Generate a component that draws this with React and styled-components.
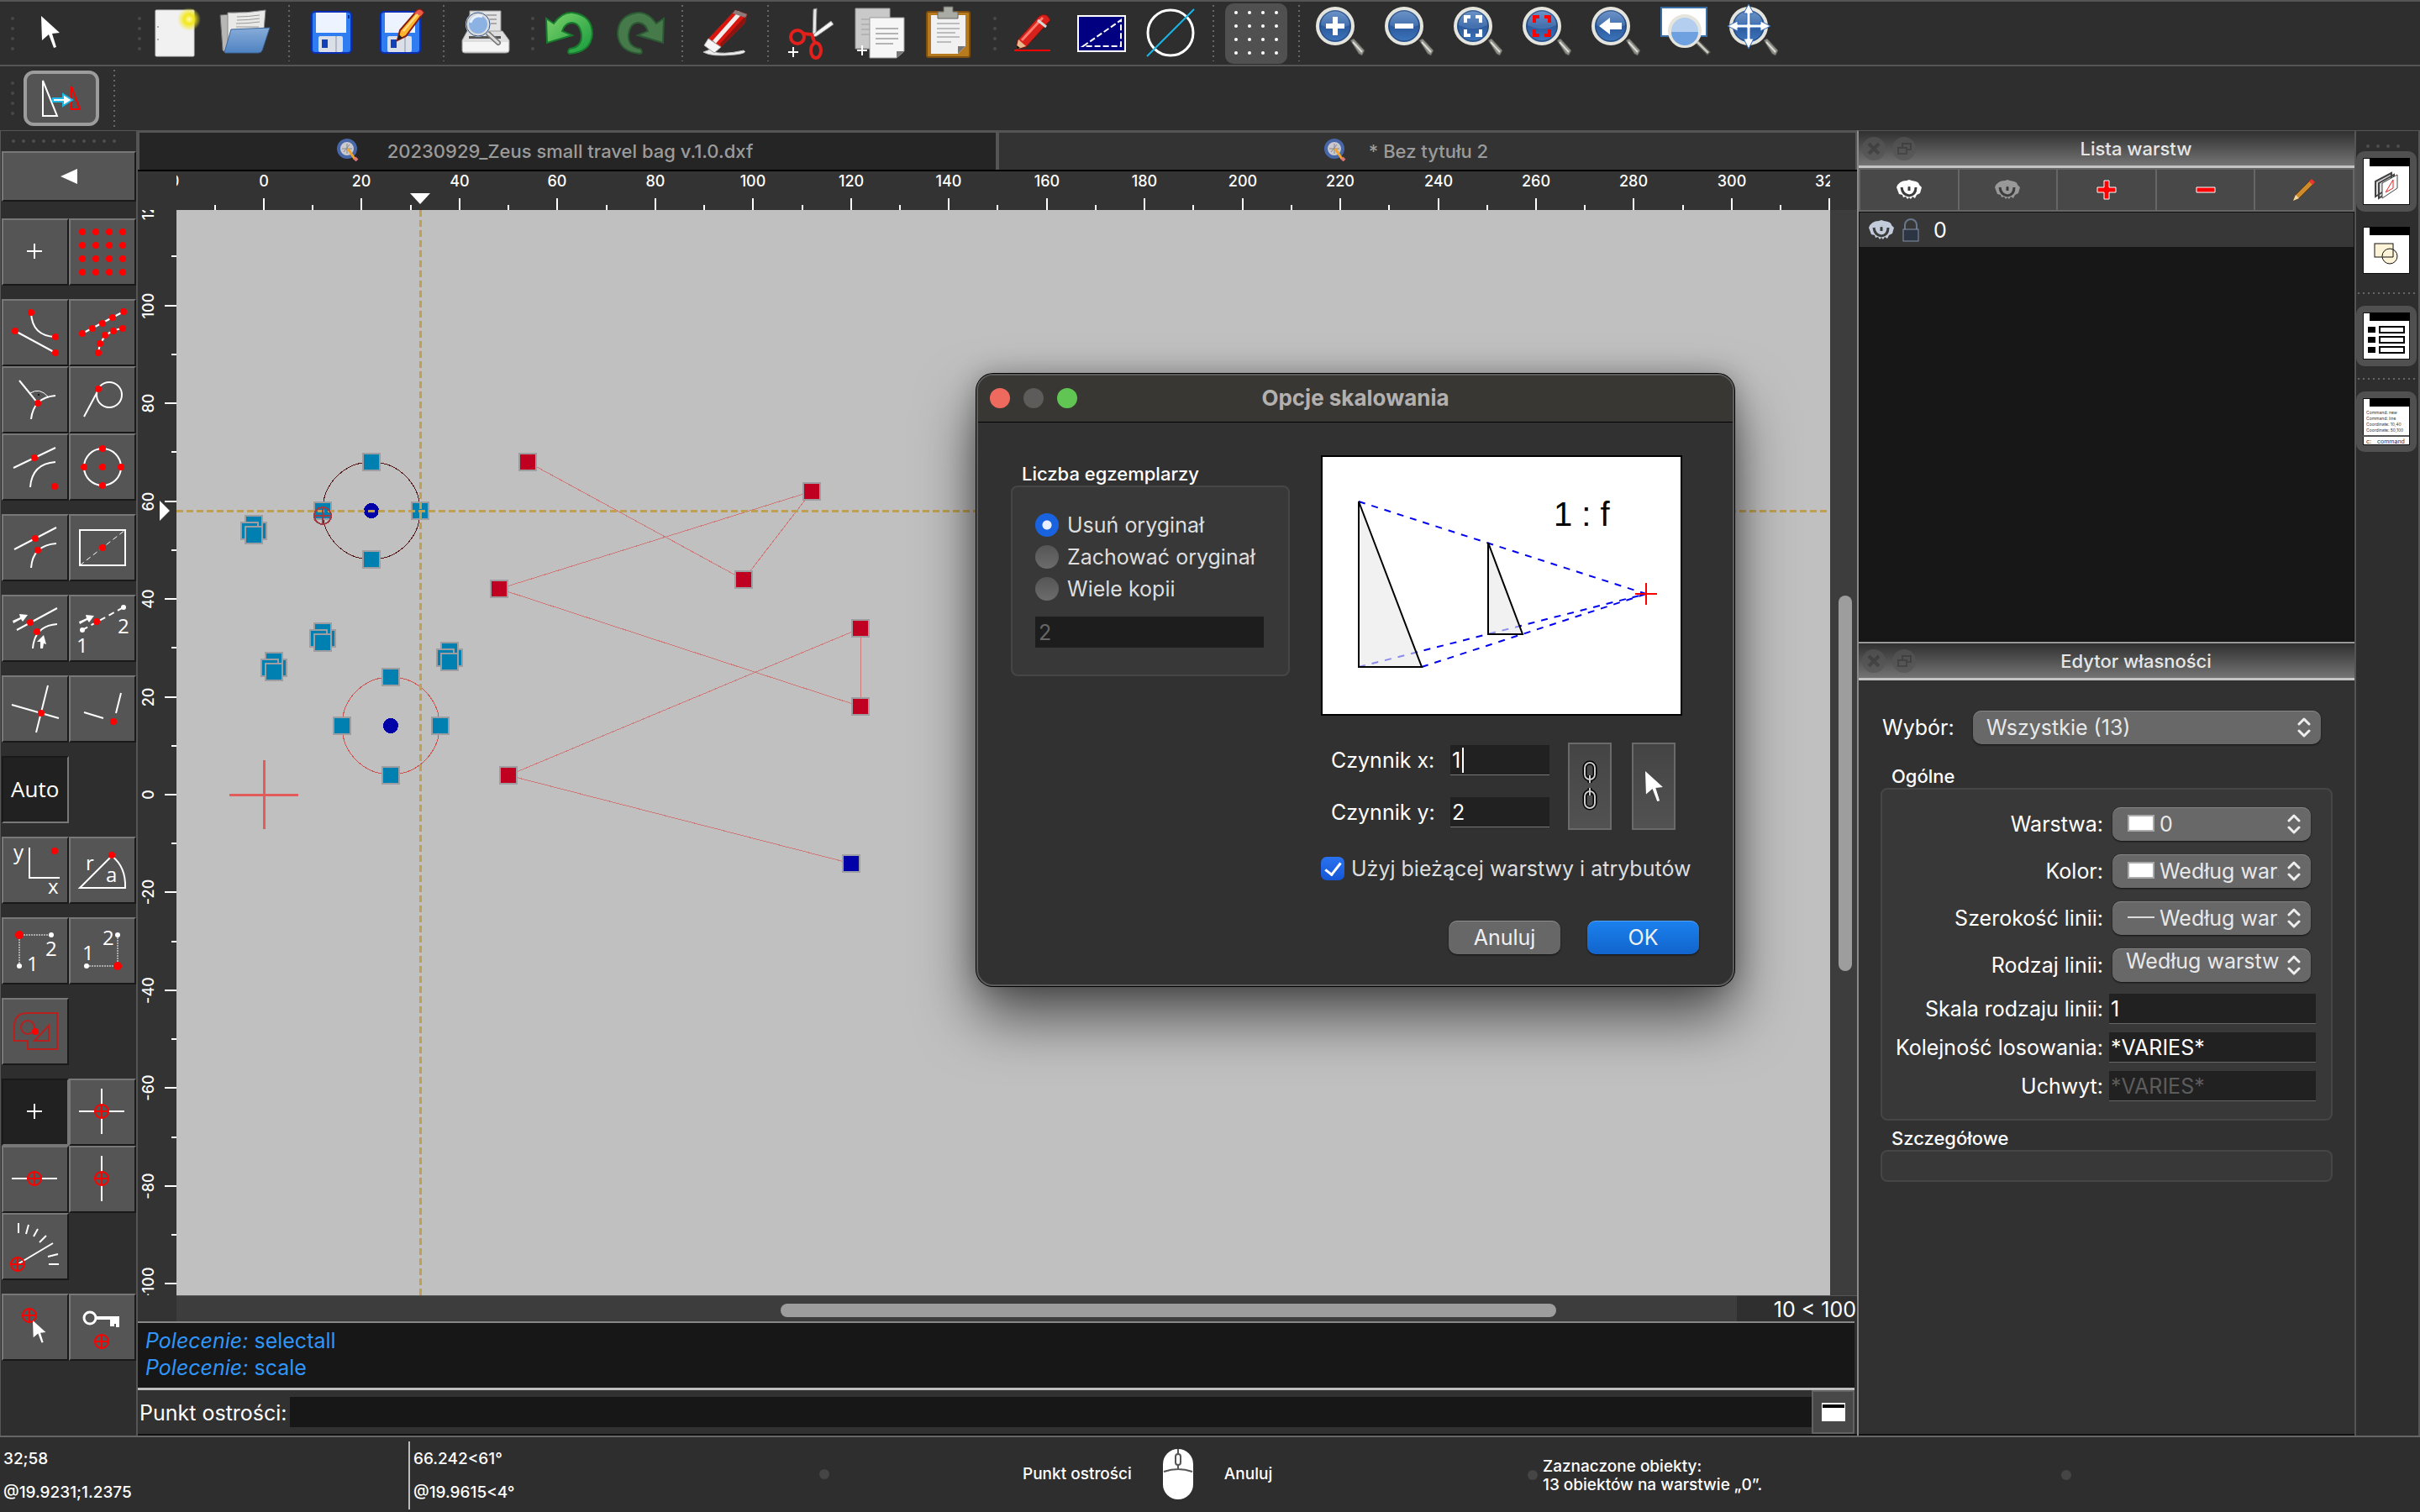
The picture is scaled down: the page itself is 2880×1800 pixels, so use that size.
import { useState } from "react";
import styled, { createGlobalStyle, css } from "styled-components";

/* world units -> canvas pixels */
const UNIT = 5.823;
const ORIGIN = { x: 104, y: 696 };
const px = (x) => Math.round(ORIGIN.x + x * UNIT);
const py = (y) => Math.round(ORIGIN.y - y * UNIT);

const range = (from, to, step) => {
    const out = [];
    for (let v = from; v <= to; v += step) out.push(v);
    return out;
};

/* ---------- toolbar icons (60 x 60) ---------- */

const CursorShape = ({ x = 0, y = 0, s = 1 }) => (
    <path
        transform={`translate(${x} ${y}) scale(${s})`}
        d="M0 0 L1 29 L9 22 L15 38 L18 37 L13 21 L22 20 Z"
        fill="#fff"
        stroke="none"
    />
);

const Lens = ({ children }) => (
    <>
        <path d="M40 38 L44 36 L57 50 L54 56 L50 54 Z" fill="#8d8d87" stroke="#4f4f4b" />
        <path d="M43 40 L54 52" stroke="#dcdcd6" strokeWidth="2" />
        <circle cx="22" cy="21" r="21" fill="url(#lens)" stroke="#e6e5dd" strokeWidth="4" />
        <circle cx="22" cy="21" r="18" fill="none" stroke="#27456f" strokeWidth="1" />
        <path d="M5 20 A17 17 0 0 1 39 20 Q22 28 5 20" fill="#7fa7d8" opacity="0.3" />
        {children}
    </>
);

const Floppy = () => (
    <>
        <rect x="6" y="4" width="47" height="49" rx="4" fill="#2f7df0" stroke="#0b2fb4" strokeWidth="2" />
        <rect x="11" y="5" width="36" height="24" fill="#eef4ff" />
        <rect x="49" y="8" width="2" height="4" fill="#0a2a8a" />
        <rect x="14" y="33" width="29" height="19" rx="2" fill="#dadfe8" />
        <rect x="18" y="37" width="7" height="10" fill="#1342b8" />
        <rect x="34" y="33" width="2" height="19" fill="#b2b9c8" />
    </>
);

const Doc = ({ x, y, fill }) => (
    <g transform={`translate(${x} ${y})`}>
        <path d="M0 0 H41 V40 L32 48 H0 Z" fill={fill} stroke="#999" />
        <path d="M32 48 V40 H41 Z" fill="#777" />
        <path d="M7 13 H34 M7 19 H34 M7 25 H34 M7 31 H28" stroke="#b4b4b4" strokeWidth="2" />
    </g>
);

const Plus = ({ x, y }) => (
    <path d={`M${x - 6} ${y} H${x + 6} M${x} ${y - 6} V${y + 6}`} stroke="#fff" strokeWidth="2" />
);

const corners = (color) => (
    <path
        d="M13 17 V10 H19 M25 10 H31 V17 M31 25 V32 H25 M19 32 H13 V25"
        fill="none"
        stroke={color}
        strokeWidth="4"
    />
);

const icons = {
    cursor: <CursorShape x={19} y={9} />,
    newFile: (
        <>
            <rect x="4" y="2" width="46" height="55" rx="1" fill="#f1f1f1" stroke="#ccc" />
            <circle cx="7" cy="22" r="1" fill="#999" />
            <circle cx="7" cy="37" r="1" fill="#999" />
            <circle cx="44" cy="13" r="14" fill="url(#glow)" />
        </>
    ),
    open: (
        <>
            <path d="M-1 8 L10 7 L12 22 L6 53 L2 50 Z" fill="#b7b7b5" stroke="#666" />
            <path d="M8 5 Q30 6 53 2 L51 26 H14 L8 45 Z" fill="#e9e9e7" stroke="#888" />
            <path d="M19 10 Q32 10 46 8 M19 14 Q32 14 46 12 M18 18 Q32 18 46 16 M18 22 H45" stroke="#999" strokeWidth="1" fill="none" />
            <path d="M12 25 L58 23 L49 50 Q48 53 44 53 H5 Q3 53 5 49 Z" fill="url(#folder)" stroke="#3d6597" />
        </>
    ),
    save: <Floppy />,
    saveAs: (
        <>
            <Floppy />
            <path d="M26 38 L29 26 L49 3 Q53 -1 57 5 L36 33 Z" fill="#ffb52b" stroke="#8a1d0c" strokeWidth="2" />
            <path d="M49 3 Q53 -1 57 5 L54 9 L46 6 Z" fill="#ef5b4a" />
            <path d="M26 38 L28 31 L32 35 Z" fill="#222" />
            <path d="M33 27 L50 7" stroke="#ffe18c" strokeWidth="2" />
        </>
    ),
    print: (
        <>
            <path d="M10 3 H47 V30 H10 Z" fill="#e3e3e3" stroke="#999" />
            <path d="M26 8 H42 M28 13 H42 M28 18 H42" stroke="#aaa" strokeWidth="2" />
            <path d="M7 27 H49 L57 38 V50 Q57 53 53 53 H4 Q1 53 1 50 V38 Z" fill="#dedede" stroke="#a0a0a0" />
            <rect x="2" y="40" width="54" height="11" fill="#f5f5f5" />
            <rect x="9" y="33" width="38" height="3" fill="#555" />
            <path d="M32 30 L44 41" stroke="#777" strokeWidth="6" strokeLinecap="round" />
            <path d="M32 30 L44 41" stroke="#ddd" strokeWidth="3" strokeLinecap="round" />
            <circle cx="20" cy="19" r="13" fill="#8bb2e3" stroke="#dcdcdc" strokeWidth="4" />
            <circle cx="20" cy="19" r="14" fill="none" stroke="#33578c" />
            <path d="M11 17 A10 10 0 0 1 25 10" fill="none" stroke="#e6f0ff" strokeWidth="3" />
        </>
    ),
    undo: (
        <path
            d="M1 12 L10 18 Q20 4 32 5 Q56 8 56 31 Q54 52 29 54 Q25 52 29 48 Q44 46 43 31 Q41 17 31 17 Q23 18 20 27 L32 32 L2 41 Z"
            fill="url(#green)"
            stroke="#177a2c"
            strokeWidth="2"
        />
    ),
    redo: (
        <path
            d="M59 12 L50 18 Q40 4 28 5 Q4 8 4 31 Q6 52 31 54 Q35 52 31 48 Q16 46 17 31 Q19 17 29 17 Q37 18 40 27 L28 32 L58 41 Z"
            fill="#467a4a"
            stroke="#2b5a34"
            strokeWidth="2"
        />
    ),
    eraser: (
        <>
            <path d="M4 52 Q24 44 14 51 Q26 56 52 50 Q58 53 42 55 Q14 58 4 52" fill="#eee" stroke="#bbb" />
            <path d="M10 36 L42 2 L56 7 L53 18 L25 46 Z" fill="#d9150d" stroke="#7c2a26" />
            <path d="M56 7 L53 18 L25 46 L24 42 Z" fill="#8d1410" />
            <path d="M17 40 L48 5" stroke="#f3eeee" strokeWidth="5" />
            <path d="M10 36 L25 46 L17 53 L5 44 Z" fill="#f6f6f6" stroke="#aaa" />
            <path d="M42 2 L56 7 L54 11 L39 6 Z" fill="#8b7b79" />
        </>
    ),
    cut: (
        <>
            <path d="M33 1 L37 0 L36 32 L32 34 Z" fill="#e8e8e8" stroke="#888" />
            <path d="M54 15 L57 19 L37 33 L32 34 L34 30 Z" fill="#f5f5f5" stroke="#888" />
            <circle cx="14" cy="34" r="8" fill="none" stroke="#e3201c" strokeWidth="4" />
            <ellipse cx="36" cy="50" rx="6" ry="9" fill="none" stroke="#e3201c" strokeWidth="4" />
            <path d="M21 30 L31 31 L35 42" fill="none" stroke="#e3201c" strokeWidth="4" />
            <Plus x={9} y={52} />
        </>
    ),
    copy: (
        <>
            <Doc x={1} y={0} fill="#c9c9c9" />
            <Doc x={18} y={11} fill="#f6f6f6" />
            <Plus x={9} y={50} />
        </>
    ),
    paste: (
        <>
            <rect x="4" y="4" width="51" height="54" rx="2" fill="#b87a1e" stroke="#7d4f10" strokeWidth="2" />
            <path d="M9 8 H50 V45 L41 54 H9 Z" fill="#f1f1f1" />
            <path d="M41 54 V45 H50 Z" fill="#777" />
            <path d="M16 18 H43 M16 24 H43 M16 29 H38 M16 34 H43 M16 40 H33" stroke="#bdbdbd" strokeWidth="2" />
            <path d="M17 12 V4 H24 V-2 H35 V4 H41 V12 Z" fill="#a9aba5" stroke="#62645f" />
        </>
    ),
    pencil: (
        <>
            <path d="M10 49 L12 38 L38 9 Q47 4 51 14 L22 46 Z" fill="#d8211b" stroke="#6e1712" />
            <path d="M17 38 L42 11" stroke="#ff7a6c" strokeWidth="3" />
            <path d="M36 14 L46 22" stroke="#d9d9d9" strokeWidth="3" />
            <path d="M10 49 L13 37 L22 45 Z" fill="#e8b98a" />
            <path d="M10 49 L11 44 L15 47 Z" fill="#111" />
            <rect x="8" y="49" width="43" height="2" fill="#f00" />
        </>
    ),
    draft: (
        <>
            <rect x="2" y="9" width="56" height="42" fill="#000080" stroke="#fff" strokeWidth="2" />
            <path d="M8 45 L53 14 V45 Z" fill="none" stroke="#fff" strokeWidth="2" strokeDasharray="7 3" />
        </>
    ),
    circle: (
        <>
            <circle cx="30" cy="29" r="27" fill="none" stroke="#fff" strokeWidth="3" />
            <path d="M2 57 L58 1" stroke="#17b8ea" strokeWidth="2" />
        </>
    ),
    grid: (
        <g fill="#fff">
            {[6, 22, 38, 54].map((y) => [6, 22, 38, 54].map((x) => <circle key={`${x}-${y}`} cx={x} cy={y - 1} r="2" />))}
        </g>
    ),
    zoomIn: <Lens><path d="M22 10 V32 M11 21 H33" stroke="#fff" strokeWidth="6" /></Lens>,
    zoomOut: <Lens><path d="M11 21 H33" stroke="#fff" strokeWidth="6" /></Lens>,
    zoomAuto: <Lens>{corners("#fff")}</Lens>,
    zoomRed: <Lens>{corners("#f00")}</Lens>,
    zoomPrev: <Lens><path d="M8 21 L21 11 V17 H35 V25 H21 V31 Z" fill="#fff" /></Lens>,
    zoomWindow: (
        <>
            <rect x="0" y="-1" width="54" height="34" fill="#fff" stroke="#3a6ea5" strokeWidth="2" />
            <path d="M43 40 L57 54" stroke="#55554f" strokeWidth="6" />
            <path d="M43 40 L56 53" stroke="#c9c9c2" strokeWidth="3" />
            <circle cx="28" cy="27" r="18" fill="#b4cef0" stroke="#e6e5dd" strokeWidth="4" />
            <path d="M12 28 H44 A16 16 0 0 1 12 28" fill="#6fa0e0" />
        </>
    ),
    pan: (
        <Lens>
            <path
                d="M22 -5 L28 6 H24 V19 H36 V15 L48 21 L36 27 V23 H24 V36 H28 L22 48 L16 36 H20 V23 H9 V27 L-3 21 L9 15 V19 H20 V6 H16 Z"
                fill="#fff"
                stroke="#2f6ab8"
            />
        </Lens>
    ),
};

/* ---------- snap / restriction icons (80 x 80) ---------- */

const Dot = ({ x, y, r = 4, fill = "#f00" }) => <circle cx={x} cy={y} r={r} fill={fill} stroke="none" />;

const Marker = ({ x, y }) => (
    <path
        d={`M${x - 8} ${y} a8 8 0 1 0 16 0 a8 8 0 1 0 -16 0 H${x + 8} M${x} ${y - 8} V${y + 8}`}
        stroke="#f00"
        strokeWidth="2"
        fill="none"
    />
);

const glyph = (x, y, text) => (
    <text x={x} y={y} fill="#fff" stroke="none" fontSize="24" fontFamily='"Open Sans", "Noto Sans", sans-serif'>
        {text}
    </text>
);

const smallPlus = <path d="M30 39 H48 M39 30 V48" />;

const snaps = {
    free: smallPlus,
    grid: [16, 32, 48, 64].map((y) => [16, 32, 48, 64].map((x) => <Dot key={`${x}-${y}`} x={x} y={y} />)),
    endpoint: (
        <>
            <path d="M35 16 Q36 44 64 45 M16 38 L64 64" />
            <Dot x={35} y={16} /><Dot x={64} y={45} /><Dot x={16} y={38} /><Dot x={64} y={64} />
        </>
    ),
    points: (
        <>
            <path d="M16 41 L65 15 M35 64 Q38 38 64 35" />
            {[[16, 41], [28, 35], [40, 29], [52, 22], [65, 15], [35, 64], [37, 53], [43, 43], [53, 38], [64, 35]].map(
                ([x, y]) => <Dot key={`${x}-${y}`} x={x} y={y} />
            )}
        </>
    ),
    perpendicular: (
        <>
            <path d="M21 17 L43 44 M35 63 Q38 37 64 35" />
            <path d="M34 32 Q45 25 55 36" strokeWidth="1" />
            <Dot x={44} y={34} r={1} fill="#000" />
            <Dot x={43} y={44} />
        </>
    ),
    tangent: (
        <>
            <circle cx="48" cy="34" r="15" />
            <path d="M18 60 L33 32" />
            <Dot x={35} y={27} />
        </>
    ),
    onEntity: (
        <>
            <path d="M14 41 L64 17 M34 64 Q36 36 64 34" />
            <Dot x={39} y={29} /><Dot x={63} y={63} />
        </>
    ),
    center: (
        <>
            <circle cx="40" cy="40" r="22" />
            <Dot x={40} y={40} /><Dot x={18} y={40} /><Dot x={62} y={40} /><Dot x={40} y={18} /><Dot x={40} y={62} />
        </>
    ),
    middle: (
        <>
            <path d="M15 42 L65 16 M35 64 Q37 37 65 35" />
            <Dot x={40} y={29} /><Dot x={43} y={43} />
        </>
    ),
    reference: (
        <>
            <rect x="13" y="19" width="54" height="42" />
            <path d="M13 61 L67 19" strokeWidth="1" strokeDasharray="6 4" />
            <Dot x={40} y={40} />
        </>
    ),
    distance: (
        <>
            <path d="M18 42 L66 16 M37 64 Q39 37 66 35" />
            <path d="M13 31 L22 27 L21 23 L31 24 L25 32 L23 29 L14 34 Z M46 64 V56 H42 L50 48 L53 59 L50 58 L49 64 Z" fill="#fff" stroke="none" />
            <Dot x={34} y={33} /><Dot x={42} y={44} />
        </>
    ),
    distanceTwo: (
        <>
            <path d="M16 42 L65 15" strokeDasharray="7 5" />
            <path d="M12 32 L21 28 L20 24 L30 25 L24 33 L22 30 L13 35 Z" fill="#fff" stroke="none" />
            <Dot x={16} y={42} r={3} fill="#fff" /><Dot x={65} y={15} r={3} fill="#fff" />
            <Dot x={33} y={32} />
            {glyph(9, 69, "1")}
            {glyph(58, 46, "2")}
        </>
    ),
    intersection: (
        <>
            <path d="M12 35 L68 51 M55 12 L41 68" />
            <Dot x={47} y={45} />
        </>
    ),
    intersectionManual: (
        <>
            <path d="M18 44 L41 51 M62 21 L56 45" />
            <Dot x={53} y={55} />
        </>
    ),
    auto: <text x="11" y="49" fill="#fff" stroke="none" fontSize="26" fontFamily='"Open Sans", "Noto Sans", sans-serif'>Auto</text>,
    xy: (
        <>
            <path d="M33 13 V49 H69" />
            <Dot x={63} y={17} />
            {glyph(14, 27, "y")}
            {glyph(55, 68, "x")}
        </>
    ),
    polar: (
        <>
            <path d="M51 23 L13 61 H67 Q68 36 51 23" />
            <Dot x={51} y={22} />
            {glyph(20, 40, "r")}
            {glyph(44, 54, "a")}
        </>
    ),
    corner: (
        <>
            <path d="M21 58 V21 H59" strokeWidth="1" strokeDasharray="2 1" />
            <Dot x={59} y={21} r={3} fill="#fff" /><Dot x={21} y={58} r={3} fill="#fff" />
            <Dot x={21} y={21} r={5} />
            {glyph(52, 46, "2")}
            {glyph(30, 64, "1")}
        </>
    ),
    cornerTwo: (
        <>
            <path d="M58 21 V58 H21" strokeWidth="1" strokeDasharray="2 1" />
            <Dot x={58} y={21} r={3} fill="#fff" /><Dot x={21} y={58} r={3} fill="#fff" />
            <Dot x={58} y={58} r={5} />
            {glyph(40, 33, "2")}
            {glyph(16, 51, "1")}
        </>
    ),
    shape: (
        <>
            <path d="M15 51 V34 Q15 18 31 18 H66 V61 H31 V51 Z M39 51 L56 33 V51 Z" stroke="#b8201d" />
            <circle cx="31" cy="35" r="8" stroke="#b8201d" />
            <Dot x={40} y={40} />
        </>
    ),
    ortho: <><path d="M12 39 H66 M39 12 V66" /><Marker x={39} y={39} /></>,
    horizontal: <><path d="M12 39 H66" /><Marker x={39} y={39} /></>,
    vertical: <><path d="M39 12 V66" /><Marker x={39} y={39} /></>,
    angle: (
        <>
            <path d="M19 61 L61 36" />
            <path d="M20 12 V24 M32 14 L29 25 M43 19 L38 28 M53 27 L45 35 M67 49 L55 52 M56 61 H68" />
            <Marker x={19} y={61} />
        </>
    ),
    relative: <><Marker x={33} y={26} /><CursorShape x={37} y={32} s={0.7} /></>,
    lock: (
        <>
            <circle cx="25" cy="29" r="7" strokeWidth="3" />
            <path d="M32 27 H60 V40 H56 V36 H54 V39 H49 V31 H32 Z" fill="#fff" stroke="none" />
            <Marker x={39} y={57} />
        </>
    ),
};

const snapGroups = [
    ["free", "grid"],
    ["endpoint", "points", "perpendicular", "tangent", "onEntity", "center"],
    ["middle", "reference"],
    ["distance", "distanceTwo"],
    ["intersection", "intersectionManual"],
    ["auto"],
    ["xy", "polar"],
    ["corner", "cornerTwo"],
    ["shape"],
    ["freeRestriction", "ortho", "horizontal", "vertical", "angle"],
    ["relative", "lock"],
];

const pressed = ["auto", "freeRestriction"];

/* ---------- small drawings ---------- */

const Eye = ({ color }) => (
    <svg width="30" height="24" viewBox="0 0 30 24" aria-hidden="true">
        <path d="M0 9 Q3 1 12 1 L15 0 L18 1 Q27 2 27 6 L30 9 L28 16 L24 18 L22 22 L19 20 L17 23 L15 21 L13 23 L11 20 L8 21 L7 18 L3 17 Z" fill={color} />
        <path d="M6 9 Q7 18 15 19 Q23 18 23 9 M15 6 V13" fill="none" stroke="#3c3c3c" strokeWidth="3" />
        <circle cx="15" cy="11" r="4" fill="none" stroke={color} strokeWidth="2" />
    </svg>
);

const Chevrons = () => (
    <svg width="16" height="24" viewBox="0 0 16 24" aria-hidden="true">
        <path d="M2 8 L8 2 L14 8 M2 16 L8 22 L14 16" fill="none" stroke="#eee" strokeWidth="3" strokeLinecap="round" strokeLinejoin="round" />
    </svg>
);

const TabLogo = () => (
    <svg width="26" height="28" viewBox="0 0 26 28" aria-hidden="true">
        <circle cx="12" cy="13" r="10" fill="#c9c9cf" stroke="#4767a8" strokeWidth="4" />
        <path d="M6 13 H18 M12 7 V19 M8 17 L15 8" stroke="#888" />
        <path d="M13 13 L21 25" stroke="#f1a32a" strokeWidth="3" />
        <path d="M21 24 L24 27" stroke="#d77" strokeWidth="4" />
    </svg>
);

const panelIcons = {
    layers: (
        <>
            <path d="M15 28 L34 18 V34 L15 46 Z M19 30 L37 20 V36 L19 48 Z" fill="#ddd" stroke="#444" strokeWidth="2" />
            <path d="M23 30 L41 20 V36 L23 48 Z" fill="#fff" stroke="#444" strokeWidth="1" />
            <path d="M27 41 L36 26 V36 Z" fill="none" stroke="#e22" strokeWidth="1" />
        </>
    ),
    blocks: (
        <>
            <rect x="14" y="20" width="22" height="16" fill="#fdf3d6" stroke="#111" />
            <circle cx="32" cy="35" r="9" fill="#fdf3d6" stroke="#111" />
            <path d="M24 36 H36 V27" fill="none" stroke="#111" />
        </>
    ),
    properties: [17, 29, 41].map((y) => (
        <g key={y}>
            <rect x="6" y={y} width="9" height="7" fill="#000" />
            <rect x="20" y={y} width="29" height="7" fill="#fff" stroke="#000" strokeWidth="2" />
        </g>
    )),
    command: (
        <g fontFamily="Inter, sans-serif" fill="#333">
            <text x="4" y="19" fontSize="5">Command: new</text>
            <text x="4" y="26" fontSize="5">Command: line</text>
            <text x="4" y="33" fontSize="5">Coordinate: 10,40</text>
            <text x="4" y="40" fontSize="5">Coordinate: 50,100</text>
            <path d="M0 45 H55" stroke="#555" strokeWidth="2" />
            <text x="4" y="54" fontSize="7">c:</text>
            <text x="17" y="54" fontSize="7">command</text>
        </g>
    ),
};

const HorizontalRuler = () => (
    <RulerSvg aria-hidden="true">
        {range(-20, 320, 20).map((v) => (
            <g key={v}>
                <text x={px(v)} y="18" textAnchor="middle">{v}</text>
                <path d={`M${px(v)} 32 V46`} />
            </g>
        ))}
        {range(-10, 330, 20).map((v) => <path key={v} d={`M${px(v)} 40 V46`} />)}
        <path d={`M${px(32) - 12} 26 h24 l-12 13 Z`} fill="#fff" stroke="none" />
    </RulerSvg>
);

const VerticalRuler = () => (
    <RulerSvg aria-hidden="true">
        {range(-100, 120, 20).map((v) => (
            <g key={v}>
                <text x="19" y={py(v)} textAnchor="middle" transform={`rotate(-90 19 ${py(v)})`}>{v}</text>
                <path d={`M32 ${py(v)} H46`} />
            </g>
        ))}
        {range(-90, 110, 20).map((v) => <path key={v} d={`M40 ${py(v)} H46`} />)}
        <path d={`M26 ${py(58) - 12} v24 l12 -12 Z`} fill="#fff" stroke="none" />
    </RulerSvg>
);

const Grip = ({ x, y, fill = "#0080b0" }) => (
    <rect x={x - 10} y={y - 10} width="20" height="20" fill={fill} stroke="#9d9da2" strokeWidth="2" />
);

const polyline = [[54, 68], [98, 44], [112, 62], [48, 42], [122, 18], [122, 34], [50, 4], [120, -14]];
const circles = [
    { at: [22, 58], color: "#521616" },
    { at: [26, 14], color: "#d05050" },
];
const clusters = [[-2, 54], [12, 32], [2, 26], [38, 28]];

const Drawing = () => (
    <DrawingSvg role="img" aria-label="Rysunek">
        <polyline points={polyline.map(([x, y]) => `${px(x)},${py(y)}`).join(" ")} fill="none" stroke="#d07878" />
        {circles.map(({ at: [x, y], color }) => (
            <g key={color}>
                <circle cx={px(x)} cy={py(y)} r="58" fill="none" stroke={color} />
                <circle cx={px(x)} cy={py(y)} r="9" fill="#0000a8" />
                <Grip x={px(x)} y={py(y + 10)} />
                <Grip x={px(x)} y={py(y - 10)} />
                <Grip x={px(x - 10)} y={py(y)} />
                <Grip x={px(x + 10)} y={py(y)} />
            </g>
        ))}
        {polyline.map(([x, y], i) => (
            <Grip key={i} x={px(x)} y={py(y)} fill={i === polyline.length - 1 ? "#0000a8" : "#c00020"} />
        ))}
        {clusters.map(([x, y]) => (
            <g key={x}>
                <Grip x={px(x) + 5} y={py(y)} />
                <Grip x={px(x)} y={py(y) - 8} />
                <Grip x={px(x) - 5} y={py(y)} />
                <Grip x={px(x)} y={py(y) + 5} />
            </g>
        ))}
        <path d={`M${px(0) - 41} ${py(0)} h82 M${px(0)} ${py(0) - 41} v82`} stroke="#e25c5c" strokeWidth="3" />
        <g stroke="#bfa052" strokeWidth="3" strokeDasharray="8 4">
            <path d={`M${px(32)} 0 V3000`} />
            <path d={`M0 ${py(58)} H4000`} />
        </g>
        <g stroke="#a03a44" strokeWidth="2" fill="none">
            <circle cx={px(12)} cy={py(57)} r="10" />
            <path d={`M${px(12) - 10} ${py(57)} h20 M${px(12)} ${py(57) - 10} v20`} />
        </g>
    </DrawingSvg>
);

const ToolIcon = ({ name, label, active }) => (
    <Tool aria-label={label} $active={active}>
        <svg width="60" height="60" viewBox="0 0 60 60" overflow="visible">{icons[name]}</svg>
    </Tool>
);

const Handle = () => (
    <HandleWrap><i /><i /><i /><i /></HandleWrap>
);

const PanelTitle = ({ children }) => (
    <TitleBar>
        <TitleButton aria-label="Zamknij">
            <svg width="28" height="28"><path d="M8 8 L20 20 M20 8 L8 20" stroke="#3c3c3c" strokeWidth="4" /></svg>
        </TitleButton>
        <TitleButton aria-label="Odepnij">
            <svg width="28" height="28"><path d="M7 13 H17 V20 H7 Z M12 13 V8 H22 V15 H17" fill="none" stroke="#3c3c3c" strokeWidth="2" /></svg>
        </TitleButton>
        <h2>{children}</h2>
    </TitleBar>
);

const Drop = ({ id, value, mark, raised }) => (
    <DropBox>
        {mark === "swatch" && <Swatch />}
        {mark === "line" && <LineMark />}
        <DropSelect id={id} $raised={raised} defaultValue={value}>
            <option>{value}</option>
        </DropSelect>
        <Chevrons />
    </DropBox>
);

const ScaleDialog = () => {
    const [mode, setMode] = useState("delete");
    const modes = [
        ["delete", "Usuń oryginał"],
        ["keep", "Zachować oryginał"],
        ["multiple", "Wiele kopii"],
    ];

    return (
        <Dialog role="dialog" aria-labelledby="dialog-title">
            <DialogBar>
                <Lights>
                    <Light $color="#ee6a5f" aria-label="Zamknij okno" />
                    <Light $color="#5d5c5a" aria-label="Minimalizuj" />
                    <Light $color="#61c554" aria-label="Powiększ" />
                </Lights>
                <h1 id="dialog-title">Opcje skalowania</h1>
            </DialogBar>
            <DialogBody>
                <CopiesColumn>
                    <GroupTitle>Liczba egzemplarzy</GroupTitle>
                    <CopiesBox>
                        {modes.map(([key, text]) => (
                            <RadioRow key={key}>
                                <input type="radio" name="copies" checked={mode === key} onChange={() => setMode(key)} />
                                {text}
                            </RadioRow>
                        ))}
                        <CountInput aria-label="Liczba kopii" defaultValue="2" disabled={mode !== "multiple"} />
                    </CopiesBox>
                </CopiesColumn>
                <ScaleColumn>
                    <Preview viewBox="2 2 426 306" role="img" aria-label="Skala 1 : f">
                        <g fill="none" stroke="#0000f0" strokeWidth="2" strokeDasharray="8 8">
                            <path d="M45 55 L387 165" />
                            <path d="M45 252 L387 165" />
                            <path d="M120 252 L387 165" />
                        </g>
                        <path d="M45 55 V252 H120 Z M199 104 V213 H240 Z" fill="#e8e8e8" fillOpacity="0.6" stroke="#000" strokeWidth="2" />
                        <path d="M374 165 H400 M387 152 V178" stroke="#f00" strokeWidth="2" />
                        <text x="277" y="84" fontSize="40" fontFamily='"Liberation Sans", sans-serif'>1 : f</text>
                    </Preview>
                    <Factors>
                        <FactorGrid>
                            <label htmlFor="fx">Czynnik x:</label>
                            <FactorField>
                                <input id="fx" defaultValue="1" />
                                <Caret />
                            </FactorField>
                            <label htmlFor="fy">Czynnik y:</label>
                            <FactorField>
                                <input id="fy" defaultValue="2" />
                            </FactorField>
                        </FactorGrid>
                        <TallButton aria-label="Zablokuj proporcje">
                            <svg width="20" height="64" viewBox="0 0 20 64">
                                <g fill="none" stroke="#000" strokeWidth="5">
                                    <rect x="4" y="4" width="12" height="20" rx="6" />
                                    <path d="M10 19 V28 M10 34 V43" />
                                    <rect x="4" y="38" width="12" height="20" rx="6" />
                                </g>
                                <g fill="none" stroke="#ccc" strokeWidth="2">
                                    <rect x="4" y="4" width="12" height="20" rx="6" />
                                    <path d="M10 19 V28 M10 34 V43" />
                                    <rect x="4" y="38" width="12" height="20" rx="6" />
                                </g>
                            </svg>
                        </TallButton>
                        <TallButton aria-label="Wskaż współczynnik">
                            <svg width="24" height="40"><CursorShape x={2} y={2} s={0.95} /></svg>
                        </TallButton>
                    </Factors>
                    <CheckRow>
                        <input type="checkbox" defaultChecked />
                        Użyj bieżącej warstwy i atrybutów
                    </CheckRow>
                    <Actions>
                        <PushButton>Anuluj</PushButton>
                        <PushButton $primary>OK</PushButton>
                    </Actions>
                </ScaleColumn>
            </DialogBody>
        </Dialog>
    );
};

const App = () => (
    <Page>
        <GlobalStyle />
        <Defs aria-hidden="true">
            <linearGradient id="lens" x1="0" y1="0" x2="0" y2="1">
                <stop offset="0" stopColor="#6d94c8" />
                <stop offset="0.5" stopColor="#2c5a9c" />
                <stop offset="1" stopColor="#3f78c0" />
            </linearGradient>
            <linearGradient id="folder" x1="0" y1="0" x2="0" y2="1">
                <stop offset="0" stopColor="#87acd9" />
                <stop offset="1" stopColor="#4f83c2" />
            </linearGradient>
            <linearGradient id="green" x1="0" y1="0" x2="1" y2="1">
                <stop offset="0" stopColor="#7fd36b" />
                <stop offset="1" stopColor="#159a3c" />
            </linearGradient>
            <radialGradient id="glow">
                <stop offset="0" stopColor="#fffbb0" />
                <stop offset="0.4" stopColor="#f3e81c" />
                <stop offset="1" stopColor="#f3e81c" stopOpacity="0" />
            </radialGradient>
        </Defs>

        <Toolbar>
            <Handle />
            <ToolIcon name="cursor" label="Zaznacz" />
            <ToolbarGap />
            <Handle />
            <ToolIcon name="newFile" label="Nowy" />
            <ToolIcon name="open" label="Otwórz" />
            <Divider />
            <ToolIcon name="save" label="Zapisz" />
            <ToolIcon name="saveAs" label="Zapisz jako" />
            <Divider />
            <ToolIcon name="print" label="Podgląd wydruku" />
            <Handle />
            <ToolIcon name="undo" label="Cofnij" />
            <ToolIcon name="redo" label="Ponów" />
            <Divider />
            <ToolIcon name="eraser" label="Usuń" />
            <Divider />
            <ToolIcon name="cut" label="Wytnij" />
            <ToolIcon name="copy" label="Kopiuj" />
            <ToolIcon name="paste" label="Wklej" />
            <Handle />
            <ToolIcon name="pencil" label="Pióro" />
            <ToolIcon name="draft" label="Szkic" />
            <ToolIcon name="circle" label="Wygładzanie" />
            <Divider />
            <ToolIcon name="grid" label="Siatka" active />
            <Divider />
            <ToolIcon name="zoomIn" label="Powiększ" />
            <ToolIcon name="zoomOut" label="Pomniejsz" />
            <ToolIcon name="zoomAuto" label="Dopasuj" />
            <ToolIcon name="zoomRed" label="Dopasuj zaznaczone" />
            <ToolIcon name="zoomPrev" label="Poprzedni widok" />
            <ToolIcon name="zoomWindow" label="Powiększ okno" />
            <ToolIcon name="pan" label="Przesuń" />
        </Toolbar>

        <OptionBar>
            <Handle />
            <CurrentTool aria-label="Skaluj">
                <svg width="50" height="50" viewBox="0 0 50 50">
                    <path d="M3 4 V46 H20 Z" fill="none" stroke="#fff" strokeWidth="2" />
                    <path d="M37 11 V38 H47 Z" fill="none" stroke="#f00" strokeWidth="2" />
                    <path d="M15 25 H27 V20 L38 27 L27 34 V29 H15 Z" fill="#fff" stroke="#1cb9e6" strokeWidth="2" />
                </svg>
            </CurrentTool>
            <Divider />
        </OptionBar>

        <Workspace>
            <SnapDock>
                <DockDots>{range(1, 11, 1).map((n) => <i key={n} />)}</DockDots>
                <BackButton aria-label="Wstecz">
                    <svg width="20" height="18"><path d="M20 0 V18 L0 9 Z" fill="#fff" /></svg>
                </BackButton>
                {snapGroups.map((group) => (
                    <SnapGroup key={group[0]}>
                        {group.map((name) => (
                            <SnapButton key={name} aria-label={name} $pressed={pressed.includes(name)}>
                                <svg viewBox="0 0 80 80" fill="none" stroke="#fff" strokeWidth="2">
                                    {snaps[name] || smallPlus}
                                </svg>
                            </SnapButton>
                        ))}
                    </SnapGroup>
                ))}
            </SnapDock>

            <Main>
                <Tabs>
                    <Tab $current><TabLogo />20230929_Zeus small travel bag v.1.0.dxf</Tab>
                    <Tab><TabLogo />* Bez tytułu 2</Tab>
                </Tabs>
                <View>
                    <Corner />
                    <HorizontalRuler />
                    <Corner />
                    <VerticalRuler />
                    <Drawing />
                    <VScroll><i /></VScroll>
                    <Corner />
                    <HScroll><i /></HScroll>
                </View>
                <Console>
                    <p><em>Polecenie:</em> selectall</p>
                    <p><em>Polecenie:</em> scale</p>
                </Console>
                <CommandRow>
                    <label htmlFor="command">Punkt ostrości:</label>
                    <input id="command" />
                    <button aria-label="Opcje">
                        <svg width="28" height="22"><rect width="28" height="22" fill="#fff" /><rect x="1" y="2" width="26" height="4" fill="#000" /></svg>
                    </button>
                </CommandRow>
            </Main>

            <Panels>
                <LayerPanel>
                    <PanelTitle>Lista warstw</PanelTitle>
                    <LayerTools>
                        <button aria-label="Pokaż wszystkie"><Eye color="#fff" /></button>
                        <button aria-label="Ukryj wszystkie"><Eye color="#999" /></button>
                        <button aria-label="Dodaj warstwę">
                            <svg width="24" height="24"><path d="M9 1 H15 V9 H23 V15 H15 V23 H9 V15 H1 V9 H9 Z" fill="#f00" stroke="#fff" /></svg>
                        </button>
                        <button aria-label="Usuń warstwę">
                            <svg width="24" height="24"><path d="M1 9 H23 V15 H1 Z" fill="#f00" stroke="#fff" /></svg>
                        </button>
                        <button aria-label="Edytuj warstwę">
                            <svg width="28" height="28">
                                <path d="M1 27 L4 20 L23 1 L27 5 L8 24 Z" fill="#cf8c2d" stroke="#6b3d10" />
                                <path d="M20 4 L23 1 L27 5 L24 8 Z" fill="#e33" />
                                <path d="M1 27 L4 20 L8 24 Z" fill="#f0dca8" />
                            </svg>
                        </button>
                    </LayerTools>
                    <LayerList>
                        <li>
                            <Eye color="#c3ccdb" />
                            <svg width="20" height="28" aria-hidden="true">
                                <path d="M3 13 V8 A7 7 0 0 1 17 8 V13" fill="none" stroke="#68788c" strokeWidth="2" />
                                <rect x="1" y="13" width="18" height="14" fill="#2c3544" stroke="#8391a5" />
                            </svg>
                            <span>0</span>
                        </li>
                    </LayerList>
                </LayerPanel>
                <PropertyPanel>
                    <PanelTitle>Edytor własności</PanelTitle>
                    <PropertyBody>
                        <Selection>
                            <label htmlFor="selection">Wybór:</label>
                            <Drop id="selection" value="Wszystkie (13)" />
                        </Selection>
                        <GroupTitle>Ogólne</GroupTitle>
                        <GeneralBox>
                            <DropFields>
                                <Field $drop><label htmlFor="layer">Warstwa:</label><Drop id="layer" value="0" mark="swatch" /></Field>
                                <Field $drop><label htmlFor="color">Kolor:</label><Drop id="color" value="Według warstwy" mark="swatch" /></Field>
                                <Field $drop><label htmlFor="width">Szerokość linii:</label><Drop id="width" value="Według warstwy" mark="line" /></Field>
                                <Field $drop><label htmlFor="type">Rodzaj linii:</label><Drop id="type" value="Według warstwy" raised /></Field>
                            </DropFields>
                            <TextFields>
                                <Field><label htmlFor="scale">Skala rodzaju linii:</label><input id="scale" defaultValue="1" /></Field>
                                <Field><label htmlFor="order">Kolejność losowania:</label><input id="order" defaultValue="*VARIES*" /></Field>
                                <Field><label htmlFor="handle">Uchwyt:</label><input id="handle" defaultValue="*VARIES*" disabled /></Field>
                            </TextFields>
                        </GeneralBox>
                        <GroupTitle>Szczegółowe</GroupTitle>
                        <DetailBox />
                    </PropertyBody>
                </PropertyPanel>
            </Panels>

            <PanelBar>
                <DockDots $narrow><i /><i /><i /><i /></DockDots>
                {[["layers", true], ["blocks", false], ["properties", true], ["command", true]].map(([name, on]) => (
                    <PanelToggle key={name} $on={on} $ruled={name === "properties" || name === "command"}>
                        <button aria-label={name}>
                            <svg width="56" height="56" viewBox="0 0 56 56">
                                <rect width="56" height="56" fill="#fff" stroke="#111" strokeWidth="2" />
                                <rect x="8" width="48" height="10" fill="#000" />
                                {panelIcons[name]}
                            </svg>
                        </button>
                    </PanelToggle>
                ))}
            </PanelBar>
        </Workspace>

        <StatusBar>
            <Coords><span>32;58</span><span>@19.9231;1.2375</span></Coords>
            <Coords $ruled><span>66.242&lt;61°</span><span>@19.9615&lt;4°</span></Coords>
            <MouseHint>
                <StatusDot />
                <span>Punkt ostrości</span>
                <svg width="36" height="60" viewBox="0 0 36 60" aria-hidden="true">
                    <rect width="36" height="60" rx="18" fill="#fff" />
                    <path d="M1 27 Q18 21 35 27 M18 0 V24" fill="none" stroke="#555" strokeWidth="2" />
                    <rect x="15" y="6" width="6" height="13" rx="3" fill="#fff" stroke="#555" strokeWidth="2" />
                </svg>
                <span>Anuluj</span>
            </MouseHint>
            <SelectionInfo>
                <StatusDot />
                <p>Zaznaczone obiekty:<br />13 obiektów na warstwie „0”.</p>
            </SelectionInfo>
            <SelectionInfo><StatusDot /></SelectionInfo>
        </StatusBar>

        <ScaleDialog />
    </Page>
);
export default App;

const GlobalStyle = createGlobalStyle`
    * {
        box-sizing:border-box;
        margin:0;
        padding:0;
    }

    body {
        background:#2e2e2e;
        color:#fff;
        font-family:Inter, "Open Sans", sans-serif;
        font-size:25px;
    }

    button, input, select {
        font:inherit;
        color:inherit;
        border:none;
        background:none;
        border-radius:0;
        outline:none;
    }

    svg {
        display:block;
    }
`

const Page = styled.div`
    position:relative;
    display:flex;
    flex-direction:column;
    height:100vh;
    overflow:hidden;
`

const Defs = styled.svg`
    position:absolute;
    width:0;
    height:0;
`

const Toolbar = styled.header`
    display:flex;
    height:79px;
    padding-left:1px;
    border-top:2px solid #555;
    border-bottom:2px solid #555;
    flex-shrink:0;
`

const HandleWrap = styled.div`
    width:18px;
    flex-shrink:0;
    display:flex;
    flex-direction:column;
    align-items:flex-end;
    justify-content:center;
    gap:8px;
    padding-right:2px;

    i{
        width:4px;
        height:4px;
        border-radius:50%;
        background:#484848;
    }
`

const Tool = styled.button`
    width:82px;
    flex-shrink:0;
    display:flex;
    align-items:center;
    justify-content:center;

    ${({ $active }) => $active && css`
        width:74px;
        height:72px;
        margin:2px 4px;
        border-radius:10px;
        background:#505050;
    `}
`

const ToolbarGap = styled.div`
    width:51px;
`

const Divider = styled.div`
    width:20px;
    margin:4px 0;
    background:repeating-linear-gradient(#666 0 2px, transparent 2px 6px) 9px 0 / 2px 100% no-repeat;
    flex-shrink:0;
`

const OptionBar = styled.div`
    display:flex;
    align-items:stretch;
    height:76px;
    padding-left:1px;
    flex-shrink:0;
`

const CurrentTool = styled.button`
    width:90px;
    margin:5px 8px 5px 9px;
    padding-left:16px;
    border:4px solid #9c9c9c;
    border-radius:12px;
    background:#545454;
`

const Workspace = styled.div`
    flex:1;
    min-height:0;
    display:grid;
    grid-template-columns:164px minmax(0, 1fr) 592px 78px;
    grid-template-rows:minmax(0, 1fr);
`

const SnapDock = styled.aside`
    border:1px solid #555;
    border-right:2px solid #555;
    border-bottom:none;
    padding:0 0 0 1px;
`

const DockDots = styled.div`
    height:24px;
    display:flex;
    align-items:center;
    gap:8px;
    padding:0 12px;

    i{
        width:4px;
        height:4px;
        border-radius:50%;
        background:#4d4d4d;
    }

    ${({ $narrow }) => $narrow && css`
        padding-top:12px;
    `}
`

const raised = css`
    background:#555;
    border:2px solid;
    border-color:#787878 #191919 #191919 #787878;
`

const BackButton = styled.button`
    ${raised}
    width:100%;
    height:60px;
    margin-bottom:20px;
    display:flex;
    align-items:center;
    justify-content:center;
`

const SnapGroup = styled.div`
    display:grid;
    grid-template-columns:80px 80px;
    grid-auto-rows:80px;
    margin-bottom:16px;
`

const SnapButton = styled.button`
    ${raised}

    ${({ $pressed }) => $pressed && css`
        background:#212121;
        border-color:#191919 #787878 #787878 #191919;
    `}

    svg{
        width:80px;
        height:80px;
        margin:-2px;
    }
`

const Main = styled.main`
    display:flex;
    flex-direction:column;
    border-top:3px solid #555;
    min-width:0;
`

const Tabs = styled.nav`
    display:grid;
    grid-template-columns:1fr 1fr;
    height:46px;
    border-bottom:2px solid #000;
    flex-shrink:0;
`

const Tab = styled.button`
    display:flex;
    align-items:center;
    justify-content:center;
    gap:34px;
    padding-right:54px;
    background:${({ $current }) => ($current ? "#252525" : "#333")};
    border-left:2px solid #555;
    border-right:2px solid #555;
    color:#9b9b9b;
    font-size:22px;
    font-weight:500;

    svg{
        margin-bottom:4px;
    }

    &:last-child{
        gap:27px;
        padding-right:50px;
    }
`

const View = styled.div`
    flex:1;
    min-height:0;
    display:grid;
    grid-template-columns:46px minmax(0, 1fr) 32px;
    grid-template-rows:46px minmax(0, 1fr) 31px;
`

const Corner = styled.div`
    background:#333;
`

const RulerSvg = styled.svg`
    width:100%;
    height:100%;
    background:#333;
    overflow:hidden;

    text{
        fill:#fff;
        font-size:18px;
        font-weight:500;
    }

    path{
        stroke:#fff;
        stroke-width:2px;
    }

    path[stroke="none"]{
        stroke:none;
    }
`

const DrawingSvg = styled.svg`
    width:100%;
    height:100%;
    background:#c0c0c0;
    overflow:hidden;
    shape-rendering:crispEdges;
`

const VScroll = styled.div`
    background:#3d3d3d;
    padding:459px 6px 0 10px;

    i{
        display:block;
        width:16px;
        height:447px;
        border-radius:8px;
        background:#9d9d9d;
    }
`

const HScroll = styled.div`
    grid-column:2 / 4;
    background:#3d3d3d;
    border-top:1px solid #555;
    display:flex;
    align-items:center;
    justify-content:space-between;

    i{
        width:923px;
        height:16px;
        margin:4px 0 0 719px;
        border-radius:8px;
        background:#9d9d9d;
    }

    &::after{
        content:"10 < 100";
        background:#2f2f2f;
        width:142px;
        padding:2px 1px 0 0;
        text-align:right;
        line-height:28px;
    }
`

const Console = styled.div`
    height:82px;
    flex-shrink:0;
    padding:5px 9px;
    margin-right:3px;
    background:#171717;
    border-top:2px solid #888;
    border-bottom:3px solid #bdbdbd;
    color:#2f95f9;
    line-height:32px;
`

const CommandRow = styled.div`
    height:54px;
    flex-shrink:0;
    display:flex;
    align-items:center;
    gap:3px;
    padding:0 3px 0 2px;
    background:#313131;
    border-bottom:2px solid #111;

    label{
        padding-top:2px;
    }

    input{
        flex:1;
        height:36px;
        background:#171717;
    }

    button{
        width:51px;
        height:52px;
        margin-left:-3px;
        background:#484848;
        border:2px solid #626262;
        display:flex;
        align-items:center;
        justify-content:center;
    }
`

const Panels = styled.section`
    display:flex;
    flex-direction:column;
    border-left:2px solid #8a8a8a;
    border-top:1px solid #555;
    background:#313131;
    min-width:0;
`

const TitleBar = styled.div`
    height:44px;
    flex-shrink:0;
    display:grid;
    grid-template-columns:28px 28px 1fr;
    align-items:center;
    column-gap:8px;
    padding:0 6px 0 4px;
    background:linear-gradient(#303030, #747474);
    border-bottom:3px solid #c4c4c4;

    h2{
        text-align:center;
        font-size:22px;
        font-weight:500;
        color:#e6e6e6;
    }
`

const TitleButton = styled.button`
    width:28px;
    height:28px;
    border-radius:50%;
    background:#555;
    opacity:0.7;
`

const LayerPanel = styled.div`
    height:610px;
    display:flex;
    flex-direction:column;
    border-bottom:2px solid #999;
`

const LayerTools = styled.div`
    height:52px;
    display:grid;
    grid-template-columns:repeat(5, 1fr);
    border:1px solid #666;

    button{
        background:#484848;
        border:1px solid #666;
        display:flex;
        align-items:center;
        justify-content:center;
    }
`

const LayerList = styled.ul`
    flex:1;
    background:#171717;
    list-style:none;
    border:1px solid #111;

    li{
        height:41px;
        display:flex;
        align-items:center;
        gap:10px;
        padding-left:11px;
        background:#373737;
    }

    span{
        padding-left:7px;
    }
`

const PropertyPanel = styled.div`
    flex:1;
    min-height:0;
    border-bottom:2px solid #111;
`

const PropertyBody = styled.div`
    padding:36px 26px 0 26px;
`

const Selection = styled.div`
    display:flex;
    align-items:center;
    padding-right:14px;
    margin-bottom:24px;

    label{
        width:110px;
        padding-left:2px;
    }
`

const DropBox = styled.div`
    flex:1;
    min-width:0;
    height:40px;
    display:flex;
    align-items:center;
    padding:0 12px 0 16px;
    border-radius:10px;
    background:#686868;
    box-shadow:inset 0 1px 0 #858585, 0 1px 2px #111;
    color:#e8e8e8;

    svg{
        flex-shrink:0;
        margin-left:10px;
    }
`

const DropSelect = styled.select`
    appearance:none;
    flex:1;
    min-width:0;
    height:40px;
    overflow:hidden;
    ${({ $raised }) => $raised && css`
        padding-bottom:10px;
    `}
`

const Swatch = styled.i`
    width:32px;
    height:20px;
    margin:0 6px 2px 2px;
    background:#fff;
    border:2px solid #aaa;
    flex-shrink:0;
`

const LineMark = styled.i`
    width:32px;
    height:2px;
    margin:0 6px 2px 2px;
    background:#ddd;
    flex-shrink:0;
`

const GroupTitle = styled.h3`
    font-size:22px;
    font-weight:500;
    line-height:28px;
    padding-left:13px;
`

const box = css`
    background:#383838;
    border:2px solid #464646;
    border-radius:8px;
`

const GeneralBox = styled.div`
    ${box}
    padding:21px 0;
    margin-bottom:7px;
`

const DropFields = styled.div`
    display:grid;
    row-gap:16px;
    margin-bottom:14px;
`

const TextFields = styled.div`
    display:grid;
    row-gap:10px;
`

const Field = styled.div`
    display:grid;
    grid-template-columns:263px 1fr;
    column-gap:${({ $drop }) => ($drop ? 11 : 7)}px;
    padding-right:${({ $drop }) => ($drop ? 24 : 18)}px;
    align-items:center;

    label{
        text-align:right;
        white-space:nowrap;
    }

    input{
        width:100%;
        height:36px;
        padding-left:2px;
        background:#212121;
        border-bottom:1px solid #666;
    }

    input:disabled{
        color:#5c5c5c;
    }
`

const DetailBox = styled.div`
    ${box}
    height:38px;
`

const PanelBar = styled.aside`
    border:2px solid #555;
    border-top-width:1px;
    border-bottom:none;
`

const PanelToggle = styled.div`
    margin-bottom:10px;

    ${({ $ruled }) => $ruled && css`
        padding-top:20px;
        background:repeating-linear-gradient(90deg, #666 0 2px, transparent 2px 6px) 2px 4px / 100% 2px no-repeat;
    `}

    button{
        width:72px;
        height:72px;
        border-radius:10px;
        background:${({ $on }) => ($on ? "#505050" : "transparent")};
        display:flex;
        align-items:center;
        justify-content:center;
    }
`

const StatusBar = styled.footer`
    height:91px;
    flex-shrink:0;
    border-top:2px solid #666;
    display:grid;
    grid-template-columns:486fr 489fr 843fr 635fr 427fr;
    font-size:19px;
    font-weight:500;
`

const Coords = styled.div`
    display:flex;
    flex-direction:column;
    justify-content:space-between;
    margin:5px 0 3px;
    padding:9px 4px;

    ${({ $ruled }) => $ruled && css`
        border-left:2px solid #bbb;
    `}
`

const StatusDot = styled.i`
    width:12px;
    height:12px;
    border-radius:50%;
    background:#454545;
`

const MouseHint = styled.div`
    display:flex;
    align-items:center;
    gap:37px;
    padding-bottom:2px;

    i{
        margin-right:193px;
    }
`

const SelectionInfo = styled.div`
    display:flex;
    align-items:center;
    gap:6px;

    p{
        line-height:22px;
        padding-top:2px;
    }
`

/* dialog floats over the whole window */
const Dialog = styled.section`
    position:absolute;
    left:1162px;
    top:445px;
    width:902px;
    background:#313131;
    border:2px solid #5c5c5c;
    border-radius:20px;
    box-shadow:0 0 0 1px #000, 0 36px 70px rgba(0, 0, 0, 0.6), 0 0 30px rgba(0, 0, 0, 0.25);
    overflow:hidden;
`

const DialogBar = styled.div`
    height:56px;
    display:grid;
    grid-template-columns:120px 1fr 120px;
    align-items:center;
    padding-bottom:2px;
    background:#393734;
    border-bottom:1px solid #000;

    h1{
        text-align:center;
        font-size:26px;
        font-weight:700;
        color:#b3b1af;
    }
`

const Lights = styled.div`
    display:flex;
    gap:16px;
    padding-left:14px;
`

const Light = styled.button`
    width:24px;
    height:24px;
    border-radius:50%;
    background:${({ $color }) => $color};
`

const DialogBody = styled.div`
    display:flex;
    gap:37px;
    padding:39px 40px 36px 39px;
`

const CopiesColumn = styled.div`
    width:332px;
    padding-top:8px;
`

const CopiesBox = styled.div`
    ${box}
    padding:26px 29px 32px 27px;
`

const control = css`
    appearance:none;
    width:28px;
    height:28px;
    background:linear-gradient(#555, #6c6c6c);
    flex-shrink:0;
`

const RadioRow = styled.label`
    display:flex;
    align-items:center;
    gap:10px;
    height:38px;
    white-space:nowrap;
    color:#dedede;

    input{
        ${control}
        border-radius:50%;
    }

    input:checked{
        background:radial-gradient(circle, #e8f0ff 0 5px, #1a63e0 6px);
    }
`

const CountInput = styled.input`
    width:100%;
    height:37px;
    margin-top:14px;
    padding-left:4px;
    background:#1d1d1d;
    color:#666;
`

const ScaleColumn = styled.div`
    flex:1;
`

const Preview = styled.svg`
    width:430px;
    height:310px;
    background:#fff;
    border:2px solid #000;
`

const Factors = styled.div`
    display:flex;
    padding-left:12px;
    margin:32px 0 30px;
    height:104px;
`

const FactorGrid = styled.div`
    display:grid;
    grid-template-columns:122px 118px;
    grid-auto-rows:36px;
    align-items:center;
    column-gap:20px;
    row-gap:26px;
    padding-top:3px;

    label{
        white-space:nowrap;
        text-align:right;
    }
`

const FactorField = styled.div`
    display:flex;
    position:relative;

    input{
        width:100%;
        height:36px;
        padding-left:2px;
        background:#212121;
        border-bottom:1px solid #777;
    }
`

const Caret = styled.i`
    position:absolute;
    left:14px;
    top:3px;
    width:2px;
    height:30px;
    background:#fff;
`

const TallButton = styled.button`
    width:52px;
    height:104px;
    margin-left:22px;
    display:flex;
    align-items:center;
    justify-content:center;
    background:linear-gradient(#444, #525252);
    border:2px solid #6a6a6a;

    & + &{
        margin-left:24px;
    }
`

const CheckRow = styled.label`
    display:flex;
    align-items:center;
    gap:8px;
    height:32px;
    white-space:nowrap;
    color:#dedede;

    input{
        ${control}
        border-radius:7px;
        display:flex;
        align-items:center;
        justify-content:center;
    }

    input:checked{
        background:linear-gradient(#2a72f0, #1456d6);
    }

    input:checked::after{
        content:"";
        width:8px;
        height:16px;
        margin-bottom:4px;
        border:solid #fff;
        border-width:0 3px 3px 0;
        transform:rotate(38deg);
    }
`

const Actions = styled.div`
    display:flex;
    justify-content:flex-end;
    gap:32px;
    margin-top:46px;
`

const PushButton = styled.button`
    width:133px;
    height:40px;
    border-radius:10px;
    background:${({ $primary }) => ($primary ? "linear-gradient(#1b81ee, #1264cc)" : "#676767")};
    box-shadow:inset 0 1px 0 rgba(255, 255, 255, 0.25), 0 1px 2px #111;
    color:#f0f0f0;
`
